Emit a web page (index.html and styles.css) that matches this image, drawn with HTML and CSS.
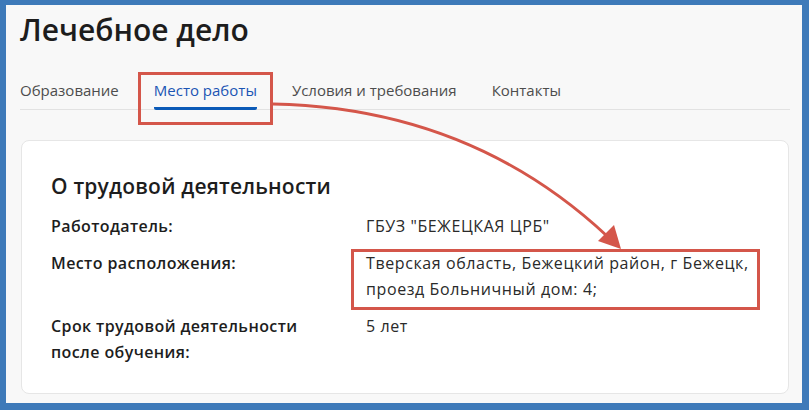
FILE: index.html
```html
<!DOCTYPE html>
<html lang="ru">
<head>
    <meta charset="UTF-8">
    <meta name="viewport" content="width=device-width, initial-scale=1.0">
    <title>Лечебное дело</title>
    <link rel="stylesheet" href="styles.css">
</head>
<body>

    <div class="frame">
        <div class="page">
            <h1 class="pageTitle">Лечебное дело</h1>

            <div class="tabs">
                <span class="tab">Образование</span>
                <span class="tab active">Место работы</span>
                <span class="tab">Условия и требования</span>
                <span class="tab">Контакты</span>
            </div>

            <div class="card">
                <h2 class="cardTitle">О трудовой деятельности</h2>

                <div class="infoRow">
                    <div class="label">Работодатель:</div>
                    <div class="value">ГБУЗ "БЕЖЕЦКАЯ ЦРБ"</div>
                </div>
                <div class="infoRow">
                    <div class="label">Место расположения:</div>
                    <div class="value">Тверская область, Бежецкий район, г Бежецк,<br>проезд Больничный дом: 4;</div>
                </div>
                <div class="infoRow">
                    <div class="label">Срок трудовой деятельности<br>после обучения:</div>
                    <div class="value">5 лет</div>
                </div>
            </div>
        </div>
    </div>

    <!-- red annotation drawn over the screenshot -->
    <svg class="notes" width="809" height="410" viewBox="0 0 809 410">
        <rect x="139.5" y="73.5" width="132" height="50" fill="none" stroke="#d4564a" stroke-width="3"/>
        <rect x="352.5" y="250.5" width="406" height="58" fill="none" stroke="#d4564a" stroke-width="3"/>
        <path d="M273 104 Q 470 108 607 236" fill="none" stroke="#d4564a" stroke-width="3"/>
        <polygon points="621,249 598,241 614,225" fill="#d4564a"/>
    </svg>

</body>
</html>
```

FILE: styles.css
```css
* {
    margin: 0;
    padding: 0;
    box-sizing: border-box;
}

body {
    background-color: #3e7ab9;
    width: 809px;
    height: 410px;
    overflow: hidden;
    font-family: "Open Sans", "Liberation Sans", sans-serif;
    color: #222222;
    position: relative;
}

.frame {
    padding: 5px 7px 7px 6px;
    height: 100%;
}

.page {
    background-color: #f8f8f8;
    height: 100%;
    padding: 8px 12px 0 14px;
}

.pageTitle {
    font-size: 30px;
    line-height: 34px;
    font-weight: 600;
    color: #1d1d1d;
}

.tabs {
    display: flex;
    gap: 35px;
    margin-top: 33px;
    border-bottom: 1px solid #e2e2e2;
}

.tab {
    font-size: 15px;
    line-height: 20px;
    color: #4d4d4d;
    padding-bottom: 7px;
    border-bottom: 3px solid transparent;
    margin-bottom: -1px;
}

.tab.active {
    color: #1b55b4;
    border-bottom-color: #0b5ab7;
    border-radius: 0 0 2px 2px;
}

.card {
    margin-top: 30px;
    margin-left: 1px;
    width: 768px;
    background-color: #ffffff;
    border: 1px solid #e6e6e6;
    border-radius: 8px;
    padding: 31px 30px 28px 29px;
}

.cardTitle {
    font-size: 21px;
    line-height: 28px;
    font-weight: 600;
    letter-spacing: 0.2px;
    color: #1d1d1d;
    margin-bottom: 13px;
}

.infoRow {
    display: grid;
    grid-template-columns: 315px 1fr;
    font-size: 16px;
    line-height: 26px;
    margin-bottom: 11px;
}

.infoRow:last-child {
    margin-bottom: 0;
}

.label {
    font-weight: 600;
    letter-spacing: 0.4px;
    color: #1d1d1d;
}

.value {
    letter-spacing: 0.6px;
    color: #2a2a2a;
}

.notes {
    position: absolute;
    left: 0;
    top: 0;
}
```
